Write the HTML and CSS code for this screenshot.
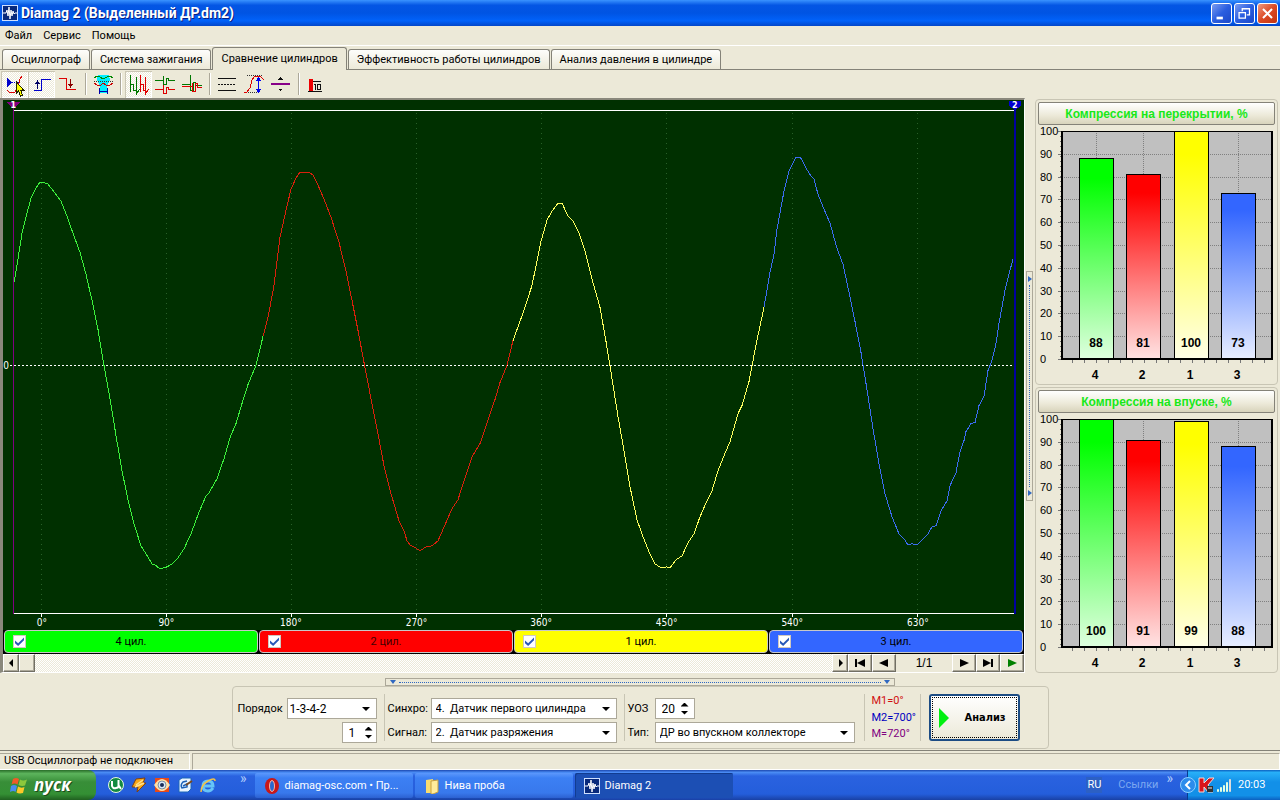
FILE: index.html
```html
<!DOCTYPE html>
<html lang="ru">
<head>
<meta charset="utf-8">
<title>Diamag 2 (Выделенный ДР.dm2)</title>
<link rel="stylesheet" href="styles.css">
</head>
<body>
<header class="titlebar">
  <svg class="app-icon" viewBox="0 0 16 16"><rect x=".5" y=".5" width="15" height="15" fill="#08297b" stroke="#cfe0ff"/><path d="M1 8h3l1-3 1 6 1-9 1 12 1-9 1 6 1-5 1 3 1-1h2" fill="none" stroke="#fff"/></svg>
  <h1>Diamag 2 (Выделенный ДР.dm2)</h1>
  <div class="window-buttons">
    <button aria-label="Свернуть"><svg viewBox="0 0 21 21"><path d="M5 14h7v3H5z" fill="#fff"/></svg></button>
    <button aria-label="Восстановить"><svg viewBox="0 0 21 21"><path d="M8 8V5h8v7h-3M8 5.500h8M4.500 9.500h7v6h-7zM4 9.500h8" fill="none" stroke="#fff" stroke-width="1.400"/></svg></button>
    <button class="close" aria-label="Закрыть"><svg viewBox="0 0 21 21"><path d="M5.500 5.500l10 10M15.500 5.500l-10 10" stroke="#fff" stroke-width="2.200"/></svg></button>
  </div>
</header>
<nav class="menubar"><button>Файл</button><button>Сервис</button><button>Помощь</button></nav>
<div class="tabs" role="tablist">
  <button role="tab">Осциллограф</button><button role="tab">Система зажигания</button><button role="tab" class="active" aria-selected="true">Сравнение цилиндров</button><button role="tab">Эффективность работы цилиндров</button><button role="tab">Анализ давления в цилиндре</button>
</div>
<div class="toolbar">
  <button class="pressed" aria-label="Маркеры"><svg viewBox="1 70 27 27"><path d="M7 77l5 4.500-5 4.500z" fill="#00c"/><path d="M12 81.500h7" stroke="#00c" stroke-dasharray="1 1"/><path d="M22 75l-2 3-2 8-3 5H9l-2-2" fill="none" stroke="#d00"/><path d="M16.500 81v11l2-2 2 5 2-1-2-5h3z" fill="#ff0" stroke="#220"/></svg></button>
  <button class="pressed" aria-label="Передний фронт"><svg viewBox="28 70 27 27"><path d="M34 89.500h7.500v-11h9" fill="none" stroke="#00c"/><path d="M37.500 88v-7" stroke="#006"/><path d="M35 83l2.500-4 2.500 4z" fill="#006"/></svg></button>
  <button aria-label="Задний фронт"><svg viewBox="55 70 27 27"><path d="M59 77.500h7v11h10" fill="none" stroke="#d00"/><path d="M70.500 78v6" stroke="#800"/><path d="M68 83l2.500 4 2.500-4z" fill="#800"/></svg></button>
  <i class="sep"></i>
  <button aria-label="Диапазон"><svg viewBox="90 70 27 27"><path d="M98 74h11l1 5-3 6 1 7h-9l1-7-3-6z" fill="#0ef"/><path d="M94 77l3-2 3 1 3 2 4-2 3-1 3 2" fill="none" stroke="#080"/><path d="M94 80.500h19" stroke="#333" stroke-dasharray="1 1"/><path d="M94 82l4 3 3-1 2-2 3 2 3 1 4-3" fill="none" stroke="#c00"/><path d="M99.500 87v6M107.500 87v6M100 90.500h7" stroke="#00a"/></svg></button>
  <i class="sep"></i>
  <button class="pressed" aria-label="Последовательно"><svg viewBox="125 70 27 27"><path d="M130.500 74v17M130 83.500h3v6h3M136.500 76v17l3-5" fill="none" stroke="#070"/><path d="M140.500 74v17M140 83.500h3v6h2M145.500 76v17l3-5" fill="none" stroke="#d00"/></svg></button>
  <button aria-label="Раздельно"><svg viewBox="152 70 27 27"><path d="M155 79.500h8v-5 9h3v-6h2v2h7" fill="none" stroke="#070"/><path d="M155 88.500h8v-5 9h3v-6h2v2h7" fill="none" stroke="#d00"/></svg></button>
  <button aria-label="Совместно"><svg viewBox="179 70 27 27"><path d="M182 83.500h8v-10 16h3v-8h2v3h7" fill="none" stroke="#070"/><path d="M182 85.500h10v-4 9h3v-8h2v4h5" fill="none" stroke="#d00"/></svg></button>
  <i class="sep"></i>
  <button aria-label="Линии"><svg viewBox="214 70 27 27"><path d="M218 77.500h18M218 89.500h18" stroke="#111"/><path d="M218 83.500h18" stroke="#111" stroke-dasharray="2 1"/></svg></button>
  <button aria-label="Размах"><svg viewBox="241 70 27 27"><path d="M247 74.500h16M244 91.500h16" stroke="#333" stroke-dasharray="1 1"/><path d="M244 91h3l3-4 2-8 3-4h5l4 4" fill="none" stroke="#d00"/><path d="M258.500 79v10" stroke="#00e"/><path d="M255.500 80l3-4 3 4zM255.500 88l3 4 3-4z" fill="#00e"/></svg></button>
  <button aria-label="Нулевая линия"><svg viewBox="268 70 27 27"><path d="M271 83h19" stroke="#808" stroke-width="2"/><path d="M278 78.500l2.500-3 2.500 3zM278 87.500l2.500 3 2.500-3z" fill="#111"/></svg></button>
  <i class="sep"></i>
  <button aria-label="Гистограмма"><svg viewBox="303 70 27 27"><path d="M309 78h4v12h-4z" fill="#e00"/><path d="M308 90.500h14M313 80.500h8M315.500 83v6M314 83.500h1M317.500 83.500h3v5h-3z" fill="none" stroke="#111"/></svg></button>
</div>
<main>
  <section class="scope-column">
    <svg class="scope" role="img" aria-label="Осциллограмма">
      <svg viewBox="3 100 1021 529" preserveAspectRatio="none" width="100%" height="100%">
        <g class="grid"><path d="M41.500 113V612M166.500 113V612M291.500 113V612M416.500 113V612M541.500 113V612M666.500 113V612M792.500 113V612M917.500 113V612"/></g>
        <path d="M14 110.500H1014M14 613H1014M41.500 613v3M166.500 613v3M291.500 613v3M416.500 613v3M541.500 613v3M666.500 613v3M792.500 613v3M917.500 613v3" stroke="#fff"/>
        <path d="M10 365H1014" stroke="#fff" stroke-dasharray="2 2"/>
        <path d="M13.500 106V613" stroke="#800080"/><path d="M1015 106V613" stroke="#0000a0" stroke-width="2"/>
        <path d="M7 102h13l-6.500 7z" class="marker-one"/><path d="M1009 101h12v5l-6 4-6-4z" class="marker-two"/>
        <g class="waves">
          <polyline stroke="#3cf03c" points="14,282 17,265 22,233 27,213 31,198 36,188 40,182 43,182 48,184 55,193 61,201 67,216 73,233 80,252 86,274 92,300 98,329 104,365 110,398 116,435 122,470 128,499 134,523 141,545 146,553 152,563 155,564 160,568 167,566 172,563 178,557 184,548 191,533 198,514 206,495 209,492 217,478 224,458 230,437 236,423 242,403 248,384 256,365 263,336"/>
          <polyline stroke="#d8200c" points="263,336 268,317 274,285 280,237 286,210 291,189 296,178 300,172 309,172 313,175 318,185 324,199 331,217 339,242 346,271 352,300 358,330 364,362 370,393 377,428 384,465 391,493 399,520 404,530 407,540 410,544 414,546 420,550 426,546 432,545 438,540 445,524 452,508 458,499 464,480 472,456 480,443 486,425 495,399 500,382 507,365 513,340"/>
          <polyline stroke="#ffff60" points="513,340 524,310 532,285 541,241 547,220 552,211 558,203 562,203 568,216 573,221 579,233 585,251 592,279 600,307 606,341 612,378 618,416 624,450 630,486 637,519 643,536 649,551 655,563 661,567 667,566 670,567 676,559 682,555 688,542 694,533 700,516 706,502 712,490 718,470 724,455 730,441 738,413 742,405 749,381 754,355 758,335 764,307"/>
          <polyline stroke="#3c6cf0" points="764,307 770,272 774,254 777,229 784,191 789,171 796,157 801,158 806,168 811,176 814,179 818,194 824,209 830,223 837,248 843,264 849,292 855,321 861,352 867,389 873,428 879,463 885,493 892,516 899,533 904,538 908,544 912,543 917,544 922,539 928,533 932,526 936,525 941,510 947,500 950,485 956,472 960,451 964,440 966,431 971,423 975,422 979,405 984,396 988,370 992,360 996,343 999,323 1005,290 1010,270 1013,259"/>
        </g>
      </svg>
      <g class="marker-text"><text x="1%" y="8">1</text><text x="99.100%" y="8">2</text></g>
      <g class="axis-text">
        <text x="0.3%" y="50.700%">0</text>
        <text x="3.800%" y="99.300%">0°</text><text x="16%" y="99.300%">90°</text><text x="28.200%" y="99.300%">180°</text><text x="40.500%" y="99.300%">270°</text><text x="52.700%" y="99.300%">360°</text><text x="65%" y="99.300%">450°</text><text x="77.300%" y="99.300%">540°</text><text x="89.600%" y="99.300%">630°</text>
      </g>
    </svg>
    <div class="channels">
      <label class="green"><input type="checkbox" checked><span>4 цил.</span></label>
      <label class="red"><input type="checkbox" checked><span>2 цил.</span></label>
      <label class="yellow"><input type="checkbox" checked><span>1 цил.</span></label>
      <label class="blue"><input type="checkbox" checked><span>3 цил.</span></label>
    </div>
    <div class="pager">
      <button class="small" aria-label="Влево"><svg viewBox="0 0 12 10"><path d="M8 1v8L4 5z"/></svg></button><button class="small" aria-label="Ползунок"></button>
      <div class="track"></div>
      <button class="small" aria-label="Вправо"><svg viewBox="0 0 12 10"><path d="M5 1v8l4-4z"/></svg></button>
      <button aria-label="Первая"><svg viewBox="0 0 12 10"><path d="M1 1h2v8H1zM11 1v8L3 5z"/></svg></button>
      <button aria-label="Назад"><svg viewBox="0 0 12 10"><path d="M10 1v8L1 5z"/></svg></button>
      <output>1/1</output>
      <button aria-label="Вперёд"><svg viewBox="0 0 12 10"><path d="M2 1v8l9-4z"/></svg></button>
      <button aria-label="Последняя"><svg viewBox="0 0 12 10"><path d="M9 1h2v8H9zM1 1v8l8-4z"/></svg></button>
      <button class="play" aria-label="Пуск"><svg viewBox="0 0 12 10"><path d="M2 1v8l9-4z"/></svg></button>
    </div>
  </section>
  <div class="splitter vertical"><i></i><b></b><i></i></div>
  <aside>
    <section class="panel"><button>Компрессия на перекрытии, %</button><svg class="chart" viewBox="0 0 237 257" data-values="88,81,100,73"></svg></section>
    <section class="panel"><button>Компрессия на впуске, %</button><svg class="chart" viewBox="0 0 237 257" data-values="100,91,99,88"></svg></section>
  </aside>
</main>
<section class="settings">
  <div class="splitter"><i></i><b></b><i></i></div>
  <form class="group">
    <div class="fields order">
      <label for="order">Порядок</label><span class="select"><select id="order"><option>1-3-4-2</option></select></span>
      <span></span><span class="spin"><input aria-label="Номер цилиндра" value="1"><span><button type="button" aria-label="Больше"></button><button type="button" aria-label="Меньше"></button></span></span>
    </div>
    <div class="fields source">
      <label for="sync">Синхро:</label><span class="select"><select id="sync"><option>4.&nbsp; Датчик первого цилиндра</option></select></span>
      <label for="signal">Сигнал:</label><span class="select"><select id="signal"><option>2.&nbsp; Датчик разряжения</option></select></span>
    </div>
    <div class="fields kind">
      <label for="uoz">УОЗ</label><span class="spin"><input id="uoz" value="20"><span><button type="button" aria-label="Больше"></button><button type="button" aria-label="Меньше"></button></span></span>
      <label for="type">Тип:</label><span class="select"><select id="type"><option>ДР во впускном коллекторе</option></select></span>
    </div>
    <div class="marks"><span class="m1">M1=0°</span><span class="m2">M2=700°</span><span class="m3">M=720°</span></div>
    <button type="button" class="analyse"><svg viewBox="0 0 10 20"><path d="M0 0l10 10L0 20z" fill="#00f010"/></svg><span>Анализ</span></button>
  </form>
</section>
<footer class="status"><span>USB Осциллограф не подключен</span><span></span></footer>
<div class="taskbar">
  <button class="start"><svg viewBox="0 0 18 18"><path d="M3 3q3-2 6 0L7.500 8.500q-3-2-6 0z" fill="#f05a28"/><path d="M10 3.500q3 2 7 0l-2 6q-3 1-6.500-.5z" fill="#8cc83c"/><path d="M1 10q3-2 6 0l-1.500 6q-2-2-5.500 0z" fill="#4a8cf0"/><path d="M8 10.500q3 2 6.500.5l-1.500 6q-4 1-6.500-.5z" fill="#fcc828"/></svg>пуск</button>
  <div class="quick">
    <svg viewBox="0 0 16 16"><circle cx="8" cy="8" r="7.500" fill="#148a40" stroke="#e4f6e4"/><path d="M4 4v5q1 3 4 2 2 0 3-2l2 3M10.500 3v6" fill="none" stroke="#fff" stroke-width="2"/></svg>
    <svg viewBox="0 0 16 16"><path d="M5 2l9-1-2 5h3L6 15l1-5H1z" fill="#f8a818" stroke="#804010"/><path d="M5 8l7-5M4 10l9-4" stroke="#ffe090" stroke-width="1.500"/></svg>
    <svg viewBox="0 0 16 16"><path d="M1 1h14v14H1z" fill="#e84a18"/><path d="M0 8q8-12 16 0-8 12-16 0z" fill="#ffe0a8"/><circle cx="8" cy="8" r="4" fill="#d8e8f8" stroke="#7890a8"/><circle cx="8" cy="8" r="2" fill="#182c58"/></svg>
    <svg viewBox="0 0 16 16"><path d="M2 3l3-2h9v11l-3 3H2z" fill="#e8f4ff" stroke="#1d66b8"/><path d="M10 4L6 5Q3 8 5 11l5-1V7L6 9" fill="none" stroke="#1c60b8" stroke-width="1.500"/><path d="M9 8l6-4" stroke="#7b4a20" stroke-width="2"/></svg>
    <svg viewBox="0 0 16 16"><path d="M4 9h9q0-5-5-5T3 9t5 5q3 0 5-3" fill="none" stroke="#66c4f8" stroke-width="3"/><path d="M1 15Q1 8 8 4t7 0" fill="none" stroke="#f3c348" stroke-width="1.500"/></svg>
  </div>
  <button class="more" aria-label="Ещё значки">»</button>
  <div class="tasks">
    <button><svg viewBox="0 0 16 16"><ellipse cx="8" cy="8" rx="7" ry="8" fill="#c81818"/><ellipse cx="8" cy="8" rx="2.500" ry="5.500" fill="#2868d0" stroke="#ffb0a0"/></svg>diamag-osc.com • Пр...</button>
    <button><svg viewBox="0 0 16 16"><path d="M2 2l7-1v14H2z" fill="#f8dc70"/><path d="M7 3l7-1v12l-5 2H7z" fill="#ffec9c" stroke="#c8a040"/></svg>Нива проба</button>
    <button class="current"><svg viewBox="0 0 16 16"><rect x=".5" y=".5" width="15" height="15" fill="#08297b" stroke="#cfe0ff"/><path d="M1 8h3l1-3 1 6 1-9 1 12 1-9 1 6 1-5 1 3 1-1h2" fill="none" stroke="#fff"/></svg>Diamag 2</button>
  </div>
  <span class="lang">RU</span><span class="links">Ссылки</span><button class="more" aria-label="Ещё ссылки">»</button>
  <div class="tray">
    <button class="arrow" aria-label="Показать значки"><svg viewBox="0 0 16 16"><circle cx="8" cy="8" r="7.500" fill="#2c8cec" stroke="#8cd0ff"/><path d="M10 4L6 8l4 4" fill="none" stroke="#fff" stroke-width="2"/></svg></button>
    <svg viewBox="0 0 16 16"><path d="M1 1h5v5l5-5h5l-6 7 5 7h-5l-4-5v5H1z" fill="#d8141c" stroke="#fbd8d0"/><path d="M9 9h6v6H9z" fill="#333"/><path d="M10 11h4" stroke="#eee"/></svg>
    <svg viewBox="0 0 16 16"><path d="M1.500 12.500h1v2h-1zM4.500 10.500h1v4h-1zM7.500 8.500h1v6h-1zM10.500 5.500h1v9h-1z" fill="#7af07a" stroke="#e4ffe4"/><path d="M13.500 2.500h1v12h-1z" fill="#aaa" stroke="#ddd"/></svg>
    <time>20:03</time>
  </div>
</div>
<script src="charts.js"></script>
</body>
</html>
```
FILE: styles.css
```css
* { box-sizing: border-box; }
body { margin: 0; min-height: 100vh; display: flex; flex-direction: column; background: #ece9d8; color: #000; font: 11px/14px Roboto, "DejaVu Sans Condensed", sans-serif; }
button, input, select { font: inherit; color: inherit; margin: 0; padding: 0; border: 0; background: none; }
svg { display: block; }
.titlebar { height: 26px; display: flex; align-items: center; padding: 0 2px; gap: 3px; background: linear-gradient(#3a93ff, #0456e4 20%, #0054e3 50%, #0162fa 80%, #0346c8); color: #fff; }
.titlebar h1 { margin: 0; flex: 1; font: bold 14px/16px Roboto, sans-serif; text-shadow: 1px 1px #0a1e80; }
.app-icon { width: 16px; height: 16px; }
.window-buttons { display: flex; gap: 2px; }
.window-buttons button { width: 21px; height: 21px; border: 1px solid #fff; border-radius: 3px; background: linear-gradient(135deg, #7c9cf0, #2a5ee0 50%, #1c48c8); }
.window-buttons svg { width: 19px; height: 19px; }
.window-buttons .close { background: linear-gradient(135deg, #f09a80, #dc4a24 50%, #c23410); }
.menubar { height: 20px; padding: 1px 5px 0; display: flex; gap: 11px; border-bottom: 1px solid #fff; }
.tabs { display: flex; gap: 1px; align-items: flex-end; height: 24px; padding-left: 2px; border-bottom: 1px solid #848278; }
.tabs button { height: 20px; padding: 0 8px; border: 1px solid #848278; border-bottom: 0; border-radius: 3px 3px 0 0; background: linear-gradient(#fdfdfb, #ece9d8); white-space: nowrap; }
.tabs .active { height: 23px; background: #ece9d8; margin-bottom: -1px; }
.toolbar { height: 28px; padding-left: 1px; display: flex; align-items: center; }
.toolbar button { width: 27px; height: 27px; }
.toolbar svg { width: 27px; height: 27px; shape-rendering: crispEdges; }
.toolbar .pressed { background: repeating-conic-gradient(#fff 0 25%, #ece9d8 0 50%) 0 0 / 2px 2px; box-shadow: inset 1px 1px #cac6b4, inset -1px -1px #fff; }
.sep { width: 2px; height: 22px; margin: 0 3px; border-left: 1px solid #aca899; border-right: 1px solid #fff; }
main { flex: 1; display: flex; min-height: 575px; }
.scope-column { flex: 1; display: flex; flex-direction: column; min-width: 0; border: 2px solid #8a887c; border-width: 2px 1px 1px 3px; border-right-color: #fff; border-bottom-color: #fff; }
.scope { flex: 1; width: 100%; min-height: 0; background: #003000; }
.scope path, .waves { fill: none; shape-rendering: crispEdges; }
.scope .marker-one { fill: #800080; }
.scope .marker-two { fill: #0000d0; }
.grid { stroke: #286028; stroke-dasharray: 1 4; }
.axis-text { fill: #fff; font: 10px "DejaVu Sans Condensed", sans-serif; text-anchor: middle; }
.marker-text { fill: #fff; font: bold 8px "DejaVu Sans", sans-serif; text-anchor: middle; }
.channels { height: 24px; display: grid; grid-template-columns: repeat(4, 1fr); gap: 1px; padding: 0 1px 1px; background: #000; }
.channels label { display: grid; grid-template-columns: 13px 1fr 13px; align-items: center; padding: 0 8px; border: 1px solid #c8c8c8; border-radius: 4px; text-align: center; }
.channels input { appearance: none; width: 13px; height: 13px; background: #fff; border: 1px solid #d0c8c0; display: grid; place-items: center; }
.channels input:checked::before { content: ""; width: 9px; height: 9px; background: #2858b8; clip-path: polygon(0 40%, 35% 70%, 100% 5%, 100% 35%, 35% 100%, 0 70%); }
.green { background: #0f0; }
.red { background: #f00; color: #400; }
.yellow { background: #ff0; }
.blue { background: #36f; }
.pager { height: 18px; display: flex; background: #ece9d8; }
.pager button { width: 24px; display: grid; place-items: center; background: #ece9d8; border: 1px solid #fff; border-right-color: #716f64; border-bottom-color: #716f64; box-shadow: inset -1px -1px #aca899; }
.pager .small { width: 16px; }
.pager svg { width: 12px; height: 10px; }
.pager .play { fill: #008000; }
.pager output { width: 56px; text-align: center; font: 12px/18px "Liberation Sans", sans-serif; }
.track { flex: 1; background: repeating-conic-gradient(#fff 0 25%, #ece9d8 0 50%) 0 0 / 2px 2px; }
.splitter { display: flex; align-items: center; width: 510px; max-width: 80%; height: 8px; margin: 0 auto; padding: 0 4px; gap: 3px; border: 1px solid #aca899; }
.splitter i { border: 3px solid transparent; border-top: 4px solid #3068c0; border-bottom: 0; }
.splitter b { flex: 1; border-top: 1px dotted #3068c0; }
.splitter.vertical { flex-direction: column; align-self: center; width: 7px; height: 230px; margin: 0 2px 0 1px; padding: 4px 0; }
.splitter.vertical i { border: 3px solid transparent; border-left: 4px solid #3068c0; border-right: 0; }
.splitter.vertical b { border-top: 0; border-left: 1px dotted #3068c0; }
aside { flex: 0 0 245px; display: flex; flex-direction: column; gap: 2px; padding: 1px 2px 0 0; }
.panel { flex: 1; padding: 2px; border: 1px solid #c8c5b4; border-radius: 4px; }
.panel button { display: block; width: 100%; height: 23px; border: 1px solid #848278; border-radius: 2px; background: linear-gradient(#fff, #ece9d8 60%, #d8d4bc); color: #18e818; font: bold 12px/16px "Liberation Sans", sans-serif; }
.chart { width: 100%; font: 11px "Liberation Sans", sans-serif; }
.chart .strong { font-weight: bold; font-size: 12px; text-anchor: middle; }
.chart .lines { shape-rendering: crispEdges; }
.settings { padding: 5px 0 1px; border-bottom: 1px solid #848278; }
.group { width: 817px; max-width: 100%; margin: 0 auto; height: 63px; padding: 7px 5px; display: flex; border: 1px solid #c8c5b4; border-radius: 4px; }
.fields { display: grid; grid-template-rows: 21px 21px; row-gap: 3px; align-items: center; margin-right: 7px; padding: 4px 7px 0 0; border-right: 1px solid #c8c5b4; }
.order { grid-template-columns: 49px 90px; margin-right: 3px; }
.source { grid-template-columns: 43px 186px; margin-right: 3px; }
.kind { grid-template-columns: 27px 200px; padding-right: 9px; }
.select, .spin { position: relative; height: 21px; background: #fff; border: 1px solid #aca899; }
.select select { width: 100%; height: 19px; padding: 0 4px; appearance: none; }
.select::after { content: ""; position: absolute; right: 6px; top: 8px; border: 4px solid transparent; border-top-color: #000; border-bottom: 0; pointer-events: none; }
.order .select select { padding: 0 2px; font-size: 12px; }
.spin { display: flex; justify-content: space-between; align-items: center; width: 40px; padding: 0 5px 0 6px; }
.order .spin { width: 35px; justify-self: end; }
.spin input { width: 16px; height: 19px; font-size: 12px; }
.spin > span { display: grid; gap: 4px; }
.spin button { width: 8px; height: 4px; background: #000; clip-path: polygon(50% 0, 100% 100%, 0 100%); }
.spin button + button { clip-path: polygon(0 0, 100% 0, 50% 100%); }
.marks { display: flex; flex-direction: column; justify-content: space-between; width: 49px; border-right: 1px solid #c8c5b4; white-space: nowrap; }
.m1 { color: #d01010; }
.m2 { color: #0000c0; }
.m3 { color: #800080; }
.analyse { width: 91px; height: 47px; margin-left: 8px; display: flex; align-items: center; gap: 16px; padding-left: 8px; border: 2px solid #1c4c84; border-radius: 3px; background: linear-gradient(#fff, #ece9d8); outline: 1px dotted #000; outline-offset: -4px; font: bold 11px/14px "DejaVu Sans Condensed", sans-serif; }
.analyse svg { width: 10px; height: 20px; }
.status { height: 19px; display: flex; gap: 2px; padding-top: 2px; }
.status span { width: 190px; padding-left: 4px; border: 1px solid #fff; border-width: 1px 1px 1px 0; border-top-color: #aca899; white-space: nowrap; }
.status span + span { flex: 1; border-left: 1px solid #aca899; }
.taskbar { height: 30px; display: flex; align-items: center; background: linear-gradient(#1c48b0, #4a8cf4 8%, #2a62e0 20%, #245edb 80%, #1941a5); color: #fff; }
.taskbar svg { width: 16px; height: 16px; }
.start { display: flex; align-items: center; gap: 6px; width: 96px; height: 100%; padding-left: 10px; border-radius: 0 8px 8px 0; background: linear-gradient(#286c28, #5cb45c 12%, #388e38 40%, #349034 80%, #206020); font: italic bold 17px/20px "Open Sans", sans-serif; text-shadow: 1px 1px #1c4c1c; }
.taskbar .start svg { width: 18px; height: 18px; }
.quick { display: flex; gap: 7px; padding-left: 12px; }
.more { align-self: flex-start; font-size: 14px; color: #b0ccfc; margin-top: 1px; }
.quick + .more { margin-left: 24px; }
.tasks { flex: 1; display: flex; gap: 2px; padding-left: 8px; align-self: stretch; }
.tasks button { display: flex; align-items: center; gap: 5px; width: 158px; height: 25px; margin-top: 3px; padding-left: 9px; border-radius: 2px; background: linear-gradient(#5c98fc, #3c80f4 20%, #3878ec 80%, #2c60d0); white-space: nowrap; }
.tasks .current { background: #1c4fb4; box-shadow: inset 1px 1px #123c90; }
.lang { padding: 1px 1px; background: #2c60c4; }
.links { margin: 0 8px 0 16px; color: #7ca8f0; }
.tray { display: flex; align-items: center; gap: 2px; width: 93px; height: 100%; margin-left: 14px; background: linear-gradient(#0c60c0, #28b0f8 8%, #1290e8 40%, #1290e8 85%, #0c60c0); border-left: 1px solid #083c90; }
.tray .arrow { margin-left: -8px; }
.tray time { margin-left: 4px; }
```
FILE: charts.js
```js
const fills = [['#00ff00', '#e0ffe0'], ['#ff0000', '#ffe4e4'], ['#ffff00', '#ffffe8'], ['#3366ff', '#e8eeff']];
const centers = [58, 105, 153, 200];
const names = [4, 2, 1, 3];

document.querySelectorAll('.chart').forEach((chart, n) => {
  const values = chart.dataset.values.split(',').map(Number);
  let defs = '';
  let lines = '<rect x="24" y="6" width="210" height="228" fill="#c0c0c0"/>';
  let labels = '';
  for (let v = 0; v <= 100; v += 10) {
    const y = Math.round(234 - v * 2.28);
    lines += `<path d="M24 ${y + 0.5}H234" stroke="#808080" stroke-dasharray="1 1"/><path d="M20 ${y + 0.5}h4" stroke="#777"/>`;
    labels += `<text x="2" y="${y + 4}">${v}</text>`;
  }
  for (let t = 6; t < 234; t += 5) lines += `<path d="M22 ${t + 0.5}h2" stroke="#777"/>`;
  for (let t = 34; t < 234; t += 12) lines += `<path d="M${t + 0.5} 235v3" stroke="#777"/>`;
  centers.forEach(x => { lines += `<path d="M${x + 0.5} 6V234" stroke="#808080" stroke-dasharray="1 1"/>`; });
  lines += '<path d="M24 6.500H235" stroke="#000"/>';
  values.forEach((v, i) => {
    const x = centers[i];
    const y = Math.round(234 - v * 2.28);
    defs += `<linearGradient id="f${n}${i}" x2="0" y2="1"><stop stop-color="${fills[i][0]}"/><stop offset=".1" stop-color="${fills[i][0]}"/><stop offset="1" stop-color="${fills[i][1]}"/></linearGradient>`;
    lines += `<rect x="${x - 16.5}" y="${y + 0.5}" width="34" height="${234 - y}" fill="url(#f${n}${i})" stroke="#000"/>`;
    labels += `<text class="strong" x="${x}" y="222">${v}</text><text class="strong" x="${x - 1}" y="254">${names[i]}</text>`;
  });
  lines += '<path d="M24 6V234H234V6" fill="none" stroke="#000" stroke-width="2"/>';
  chart.innerHTML = `<defs>${defs}</defs><g class="lines">${lines}</g>${labels}`;
});
```
